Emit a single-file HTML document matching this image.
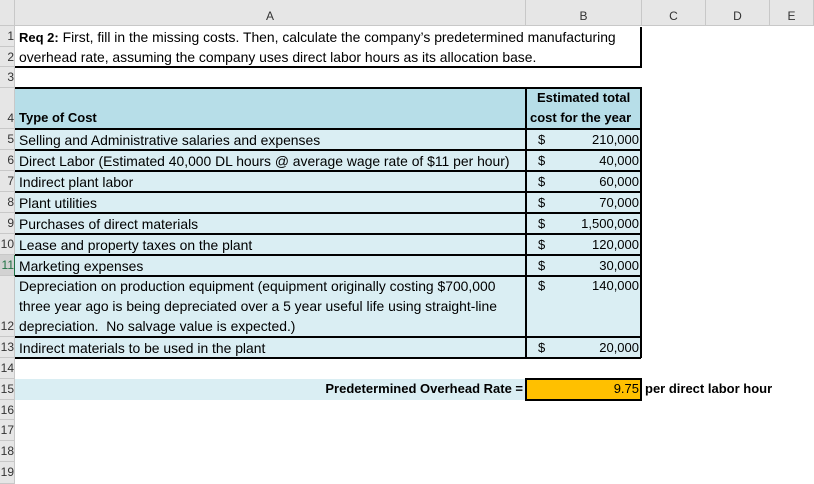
<!DOCTYPE html>
<html><head><style>
body{margin:0;width:814px;height:484px;overflow:hidden;background:#fff;font-family:"Liberation Sans",sans-serif;font-size:13px;color:#000;position:relative}
.a{position:absolute;box-sizing:border-box}
.t{position:absolute;white-space:nowrap;line-height:20px}
.L{font-size:13.9px}
.L b{font-size:13px}
.rh{position:absolute;left:0;width:15px;background:#e6e6e6;border-bottom:1px solid #c8c8c8;box-sizing:border-box;font-size:12px;color:#333;text-align:right;padding-right:1px;overflow:hidden}
.ch{position:absolute;top:0;height:26px;background:#e6e6e6;border-right:1px solid #c8c8c8;border-bottom:1px solid #c8c8c8;box-sizing:border-box;font-size:12px;color:#333;text-align:center;line-height:32px}
.row{position:absolute;left:15px;width:626px;background:#daeef3;border-bottom:2px solid #000;box-sizing:border-box}
.d{position:absolute;left:538px}
.n{position:absolute;right:175px;text-align:right}
</style></head><body>
<div class="ch" style="left:0;width:15px"></div>
<div class="ch" style="left:15px;width:511px">A</div>
<div class="ch" style="left:526px;width:116px">B</div>
<div class="ch" style="left:642px;width:64px">C</div>
<div class="ch" style="left:706px;width:64px">D</div>
<div class="ch" style="left:770px;width:44px">E</div>

<div class="rh" style="top:26px;height:21px;line-height:20px">1</div>
<div class="rh" style="top:47px;height:20px;line-height:20px">2</div>
<div class="rh" style="top:67px;height:21px;line-height:20px">3</div>
<div class="rh" style="top:88px;height:41px;line-height:60px">4</div>
<div class="rh" style="top:129px;height:21px;line-height:20px">5</div>
<div class="rh" style="top:150px;height:21px;line-height:20px">6</div>
<div class="rh" style="top:171px;height:21px;line-height:20px">7</div>
<div class="rh" style="top:192px;height:21px;line-height:20px">8</div>
<div class="rh" style="top:213px;height:21px;line-height:20px">9</div>
<div class="rh" style="top:234px;height:21px;line-height:20px">10</div>
<div class="rh" style="top:255px;height:21px;line-height:20px;background:#d2d2d2;color:#217346">11</div>
<div class="rh" style="top:276px;height:61px;line-height:100px">12</div>
<div class="rh" style="top:337px;height:21px;line-height:20px">13</div>
<div class="rh" style="top:358px;height:21px;line-height:20px">14</div>
<div class="rh" style="top:379px;height:21px;line-height:20px">15</div>
<div class="rh" style="top:400px;height:20px;line-height:20px">16</div>
<div class="rh" style="top:420px;height:21px;line-height:20px">17</div>
<div class="rh" style="top:441px;height:21px;line-height:20px">18</div>
<div class="rh" style="top:462px;height:22px;line-height:20px">19</div>
<div class="a" style="left:14px;top:26px;width:1px;height:458px;background:#c8c8c8"></div>
<div class="a" style="left:14px;top:255px;width:2px;height:21px;background:#217346"></div>

<div class="a" style="left:15px;top:27px;width:627px;height:41px;border-right:2px solid #000;border-bottom:2px solid #000"></div>
<div class="t L" style="left:19px;top:27px"><b>Req 2:</b> First, fill in the missing costs. Then, calculate the company’s predetermined manufacturing</div>
<div class="t L" style="left:19px;top:47px">overhead rate, assuming the company uses direct labor hours as its allocation base.</div>

<div class="a" style="left:15px;top:87px;width:627px;height:271px;border-top:2px solid #000;border-right:2px solid #000"></div>
<div class="row" style="top:89px;height:41px;background:#b7dee8"></div>
<div class="row" style="top:130px;height:21px"></div>
<div class="row" style="top:151px;height:21px"></div>
<div class="row" style="top:172px;height:21px"></div>
<div class="row" style="top:193px;height:21px"></div>
<div class="row" style="top:214px;height:21px"></div>
<div class="row" style="top:235px;height:21px"></div>
<div class="row" style="top:256px;height:21px"></div>
<div class="row" style="top:277px;height:61px"></div>
<div class="row" style="top:338px;height:21px"></div>
<div class="a" style="left:525px;top:87px;width:2px;height:271px;background:#000"></div>
<div class="a" style="left:640px;top:87px;width:2px;height:271px;background:#000"></div>

<div class="t" style="left:19px;top:108px"><b>Type of Cost</b></div>
<div class="t" style="left:537px;top:88px"><b>Estimated total</b></div>
<div class="t" style="left:530px;top:108px"><b>cost for the year</b></div>

<div class="t L" style="left:19px;top:130px">Selling and Administrative salaries and expenses</div>
<div class="t L" style="left:19px;top:151px">Direct Labor (Estimated 40,000 DL hours @ average wage rate of $11 per hour)</div>
<div class="t L" style="left:19px;top:172px">Indirect plant labor</div>
<div class="t L" style="left:19px;top:193px">Plant utilities</div>
<div class="t L" style="left:19px;top:214px">Purchases of direct materials</div>
<div class="t L" style="left:19px;top:235px">Lease and property taxes on the plant</div>
<div class="t L" style="left:19px;top:256px">Marketing expenses</div>
<div class="t L" style="left:19px;top:276px">Depreciation on production equipment (equipment originally costing $700,000</div>
<div class="t L" style="left:19px;top:296px">three year ago is being depreciated over a 5 year useful life using straight-line</div>
<div class="t L" style="left:19px;top:316px">depreciation.&nbsp; No salvage value is expected.)</div>
<div class="t L" style="left:19px;top:338px">Indirect materials to be used in the plant</div>

<div class="t d" style="top:130px">$</div><div class="t n" style="top:130px">210,000</div>
<div class="t d" style="top:151px">$</div><div class="t n" style="top:151px">40,000</div>
<div class="t d" style="top:172px">$</div><div class="t n" style="top:172px">60,000</div>
<div class="t d" style="top:193px">$</div><div class="t n" style="top:193px">70,000</div>
<div class="t d" style="top:214px">$</div><div class="t n" style="top:214px">1,500,000</div>
<div class="t d" style="top:235px">$</div><div class="t n" style="top:235px">120,000</div>
<div class="t d" style="top:256px">$</div><div class="t n" style="top:256px">30,000</div>
<div class="t d" style="top:276px">$</div><div class="t n" style="top:276px">140,000</div>
<div class="t d" style="top:338px">$</div><div class="t n" style="top:338px">20,000</div>

<div class="a" style="left:15px;top:379px;width:511px;height:21px;background:#daeef3"></div>
<div class="t" style="right:291px;top:379px;text-align:right"><b>Predetermined Overhead Rate =</b></div>
<div class="a" style="left:525px;top:378px;width:117px;height:23px;background:#ffc000;border:2px solid #000"></div>
<div class="t" style="right:175px;top:379px">9.75</div>
<div class="t" style="left:645px;top:379px"><b>per direct labor hour</b></div>
</body></html>
